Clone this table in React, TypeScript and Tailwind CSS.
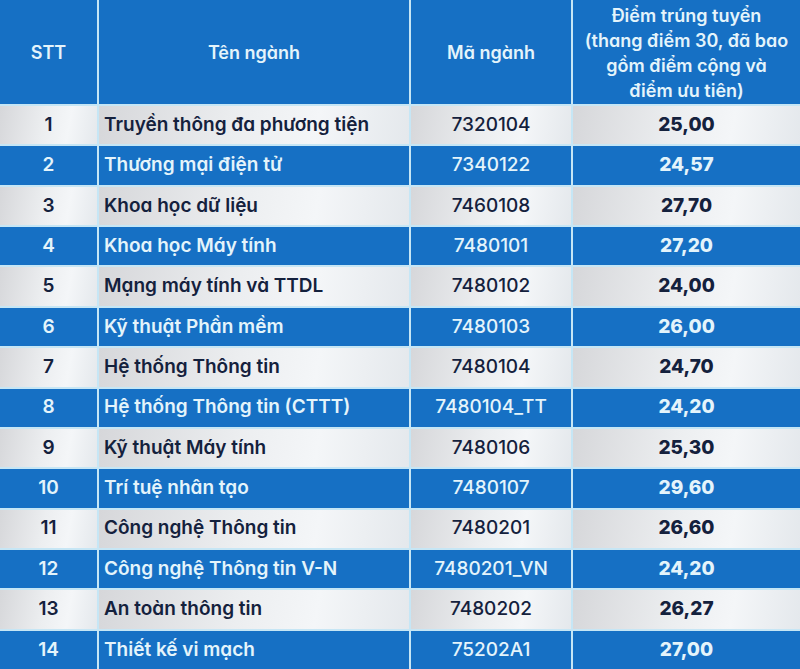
const rows = [
  { stt: 1, name: "Truyền thông đa phương tiện", code: "7320104", score: "25,00" },
  { stt: 2, name: "Thương mại điện tử", code: "7340122", score: "24,57" },
  { stt: 3, name: "Khoa học dữ liệu", code: "7460108", score: "27,70" },
  { stt: 4, name: "Khoa học Máy tính", code: "7480101", score: "27,20" },
  { stt: 5, name: "Mạng máy tính và TTDL", code: "7480102", score: "24,00" },
  { stt: 6, name: "Kỹ thuật Phần mềm", code: "7480103", score: "26,00" },
  { stt: 7, name: "Hệ thống Thông tin", code: "7480104", score: "24,70" },
  { stt: 8, name: "Hệ thống Thông tin (CTTT)", code: "7480104_TT", score: "24,20" },
  { stt: 9, name: "Kỹ thuật Máy tính", code: "7480106", score: "25,30" },
  { stt: 10, name: "Trí tuệ nhân tạo", code: "7480107", score: "29,60" },
  { stt: 11, name: "Công nghệ Thông tin", code: "7480201", score: "26,60" },
  { stt: 12, name: "Công nghệ Thông tin V-N", code: "7480201_VN", score: "24,20" },
  { stt: 13, name: "An toàn thông tin", code: "7480202", score: "26,27" },
  { stt: 14, name: "Thiết kế vi mạch", code: "75202A1", score: "27,00" },
];

export default function App() {
  return (
    <div className="h-[669px] w-[800px] overflow-hidden bg-[#c6e6f5] font-['Inter','Lato',sans-serif] [font-feature-settings:'cv11']">
      <div className="grid h-full grid-cols-[97px_310px_160px_1fr] grid-rows-[104px_repeat(14,1fr)] gap-[2px]">
        <div className="flex items-center justify-center bg-[#1670c4] text-[18px] font-semibold text-[#e4f4fb]">STT</div>
        <div className="flex items-center justify-center bg-[#1670c4] text-[18px] font-semibold text-[#e4f4fb]">Tên ngành</div>
        <div className="flex items-center justify-center bg-[#1670c4] text-[18px] font-semibold text-[#e4f4fb]">Mã ngành</div>
        <div className="flex items-center justify-center bg-[#1670c4] pt-[2px] text-center text-[18px] font-semibold leading-[25px] text-[#e4f4fb]">
          Điểm trúng tuyển
          <br />
          (thang điểm 30, đã bao
          <br />
          gồm điểm cộng và
          <br />
          điểm ưu tiên)
        </div>

        {rows.map((r) => {
          const blue = r.stt % 2 === 0;
          const cell = blue
            ? "bg-[#1670c4] text-[#e4f4fb]"
            : "bg-[linear-gradient(100deg,#d6d7da_0%,#eceef0_45%,#f4f6f8_70%,#e4e8ec_100%)] text-[#14213d]";
          return [
            <div key={`${r.stt}-a`} className={`flex items-center justify-center text-[19px] font-semibold ${cell}`}>
              {r.stt}
            </div>,
            <div key={`${r.stt}-b`} className={`flex items-center pl-[5px] text-[19px] font-semibold ${cell}`}>
              {r.name}
            </div>,
            <div key={`${r.stt}-c`} className={`flex items-center justify-center text-[19px] font-medium ${cell}`}>
              {r.code}
            </div>,
            <div key={`${r.stt}-d`} className={`flex items-center justify-center text-[19px] font-extrabold ${cell}`}>
              {r.score}
            </div>,
          ];
        })}
      </div>
    </div>
  );
}
